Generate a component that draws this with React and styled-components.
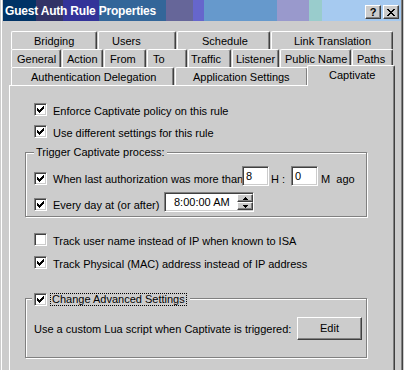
import React from 'react';
import styled, { createGlobalStyle } from 'styled-components';

const GlobalStyle = createGlobalStyle`
  html, body {
    margin: 0;
    padding: 0;
    background: #cccccc;
  }
  body {
    font-family: "Liberation Sans", Arial, sans-serif;
    font-size: 11px;
    color: #000;
  }
`;

const Window = styled.div`
  box-sizing: border-box;
  width: 404px;
  height: 370px;
  padding: 0 3px;
  background: #cccccc;
  overflow: hidden;
  box-shadow: inset 1px 0 0 #cccccc, inset 2px 0 0 #ffffff,
    inset -1px 0 0 #cccccc, inset -2px 0 0 #404040, inset -3px 0 0 #808080;
`;

const TitleBar = styled.div`
  display: flex;
  align-items: flex-start;
  justify-content: space-between;
  height: 21px;
  background: linear-gradient(
    to right,
    #003366 0 33px,
    #333366 33px 60px,
    #333399 60px 96px,
    #336699 96px 163px,
    #666699 163px 190px,
    #6666cc 190px 201px,
    #6699cc 201px 274px,
    #9999cc 274px 306px,
    #99cccc 306px 319px,
    #a6caf0 319px
  );
`;

const TitleText = styled.span`
  padding: 4px 0 0 2px;
  font-size: 12px;
  font-weight: bold;
  letter-spacing: -0.2px;
  line-height: 14px;
  color: #fff;
  white-space: nowrap;
`;

const CaptionButtons = styled.div`
  display: flex;
  gap: 2px;
  margin: 5px 2px 0 0;
`;

const CaptionButton = styled.div`
  box-sizing: border-box;
  width: 16px;
  height: 14px;
  display: flex;
  align-items: center;
  justify-content: center;
  background: #cccccc;
  border-top: 1px solid #fff;
  border-left: 1px solid #fff;
  border-right: 1px solid #404040;
  border-bottom: 1px solid #404040;
  box-shadow: inset -1px -1px 0 #808080;
  font-size: 11px;
  font-weight: bold;
  line-height: 11px;
`;

const Body = styled.div`
  padding: 10px 6px 0 6px;
`;

const TabStrip = styled.div`
  margin-left: 2px;
  width: 383px;
`;

const TabRow = styled.div`
  display: flex;
  align-items: flex-start;
  height: 18px;
`;

const Tab = styled.div`
  position: relative;
  z-index: ${p => (p.$active ? 2 : 'auto')};
  box-sizing: border-box;
  flex: none;
  width: ${p => (p.$active ? p.$w + 3 : p.$w - 1)}px;
  height: ${p => (p.$active ? 21 : 18)}px;
  margin: ${p => (p.$active ? '-2px 0 0 -2px' : '0 1px 0 0')};
  padding: 2px 0 0 ${p => p.$pad}px;
  background: #cccccc;
  border-top: 1px solid #fff;
  border-left: 1px solid #fff;
  border-right: 1px solid #404040;
  border-radius: 2px 2px 0 0;
  box-shadow: inset -1px 0 0 #808080;
  line-height: 14px;
  white-space: nowrap;
`;

const Panel = styled.div`
  box-sizing: border-box;
  height: 300px;
  display: flex;
  flex-direction: column;
  align-items: flex-start;
  padding-left: 15px;
  border-top: 1px solid #fff;
  border-left: 1px solid #fff;
  border-right: 1px solid #404040;
  box-shadow: inset -1px 0 0 #808080;
`;

const CheckRow = styled.div`
  display: flex;
  align-items: flex-start;
  gap: 6px;
  height: 13px;
  margin-top: ${p => p.$mt || 0}px;
  margin-left: 9px;
`;

const Label = styled.span`
  box-sizing: border-box;
  flex: none;
  width: ${p => (p.$w ? `${p.$w}px` : 'auto')};
  padding-top: ${p => (p.$pt === undefined ? 2 : p.$pt)}px;
  padding-left: ${p => p.$pl || 0}px;
  line-height: 13px;
  white-space: pre;
`;

const BoxFrame = styled.span`
  box-sizing: border-box;
  flex: none;
  display: flex;
  align-items: center;
  justify-content: center;
  width: 13px;
  height: 13px;
  margin-top: ${p => p.$mt || 0}px;
  background: #fff;
  border-top: 1px solid #808080;
  border-left: 1px solid #808080;
  border-right: 1px solid #fff;
  border-bottom: 1px solid #fff;
  box-shadow: inset 1px 1px 0 #404040, inset -1px -1px 0 #cccccc;
`;

const checkCols = [2, 3, 4, 3, 2, 1, 0];

const CheckBox = ({ checked, mt }) => (
  <BoxFrame $mt={mt}>
    {checked && (
      <svg width="7" height="7" viewBox="0 0 7 7" shapeRendering="crispEdges">
        {checkCols.map((y, x) => (
          <rect key={x} x={x} y={y} width="1" height="3" fill="#000" />
        ))}
      </svg>
    )}
  </BoxFrame>
);

const Group = styled.div`
  position: relative;
  box-sizing: border-box;
  width: 342px;
  height: ${p => p.$h}px;
  margin-top: ${p => p.$mt}px;
  padding: 0 4px 0 8px;
  border: 1px solid #808080;
  box-shadow: inset 1px 1px 0 #fff, 1px 1px 0 #fff;
`;

const Legend = styled.div`
  position: absolute;
  top: ${p => p.$top}px;
  left: ${p => p.$left}px;
  display: flex;
  align-items: flex-start;
  gap: 3px;
  padding: 0 ${p => p.$pr || 2}px 0 2px;
  background: #cccccc;
  line-height: 13px;
`;

const FocusLabel = styled.span`
  padding: 0 1px;
  border: 1px dotted #000;
  line-height: 11px;
  white-space: nowrap;
`;

const FieldRow = styled.div`
  display: flex;
  align-items: flex-start;
  margin-top: ${p => p.$mt}px;
`;

const TextBox = styled.div`
  box-sizing: border-box;
  flex: none;
  display: flex;
  align-items: center;
  width: ${p => p.$w}px;
  height: 20px;
  padding-left: ${p => p.$pad || 2}px;
  background: #fff;
  border-top: 1px solid #808080;
  border-left: 1px solid #808080;
  border-right: 1px solid #fff;
  border-bottom: 1px solid #fff;
  box-shadow: inset 1px 1px 0 #404040, inset -1px -1px 0 #cccccc;
  line-height: 13px;
  white-space: nowrap;
`;

const TimeText = styled.span`
  flex: 1;
`;

const Spinner = styled.div`
  display: flex;
  flex-direction: column;
`;

const SpinButton = styled.div`
  box-sizing: border-box;
  display: flex;
  align-items: center;
  justify-content: center;
  width: 16px;
  height: 8px;
  background: #cccccc;
  border-top: 1px solid #fff;
  border-left: 1px solid #fff;
  border-right: 1px solid #404040;
  border-bottom: 1px solid #404040;
  box-shadow: inset -1px -1px 0 #808080;
`;

const ButtonRow = styled.div`
  display: flex;
  align-items: center;
  justify-content: space-between;
  margin-top: ${p => p.$mt}px;
`;

const PushButton = styled.div`
  box-sizing: border-box;
  display: flex;
  align-items: center;
  justify-content: center;
  width: 65px;
  height: 23px;
  background: #cccccc;
  border-top: 1px solid #fff;
  border-left: 1px solid #fff;
  border-right: 1px solid #404040;
  border-bottom: 1px solid #404040;
  box-shadow: inset -1px -1px 0 #808080;
  line-height: 13px;
`;

const tabRows = [
  [
    ['Bridging', 87, 22],
    ['Users', 79, 13],
    ['Schedule', 94, 24],
    ['Link Translation', 123, 22],
  ],
  [
    ['General', 51, 5],
    ['Action', 42, 4],
    ['From', 43, 5],
    ['To', 41, 5],
    ['Traffic', 44, 2],
    ['Listener', 48, 3],
    ['Public Name', 72, 4],
    ['Paths', 42, 4],
  ],
  [
    ['Authentication Delegation', 164, 19],
    ['Application Settings', 134, 17],
    ['Captivate', 85, 20, true],
  ],
];

const Arrow = ({ up }) => (
  <svg width="5" height="3" viewBox="0 0 5 3" shapeRendering="crispEdges">
    <path d={up ? 'M2 0h1v1h1v1h1v1H0V2h1V1h1z' : 'M0 0h5v1H4v1H3v1H2V2H1V1H0z'} fill="#000" />
  </svg>
);

export default function App() {
  return (
    <>
      <GlobalStyle />
      <Window>
        <TitleBar>
          <TitleText>Guest Auth Rule Properties</TitleText>
          <CaptionButtons>
            <CaptionButton>?</CaptionButton>
            <CaptionButton>
              <svg width="8" height="7" viewBox="0 0 8 7" shapeRendering="crispEdges">
                <path
                  d="M0 0h2v1h1v1h2V1h1V0h2v1H7v1H6v1H5v1h1v1h1v1h1v1H6V6H5V5H3v1H2v1H0V6h1V5h1V4h1V3H2V2H1V1H0z"
                  fill="#000"
                />
              </svg>
            </CaptionButton>
          </CaptionButtons>
        </TitleBar>

        <Body>
          <TabStrip>
            {tabRows.map((row, i) => (
              <TabRow key={i}>
                {row.map(([name, w, pad, active]) => (
                  <Tab key={name} $w={w} $pad={active ? pad + 1 : pad} $active={active}>
                    {name}
                  </Tab>
                ))}
              </TabRow>
            ))}
          </TabStrip>

          <Panel>
            <CheckRow $mt={17}>
              <CheckBox checked />
              <Label>Enforce Captivate policy on this rule</Label>
            </CheckRow>
            <CheckRow $mt={9}>
              <CheckBox checked />
              <Label>Use different settings for this rule</Label>
            </CheckRow>

            <Group $mt={14} $h={65}>
              <Legend $top={-7} $left={8}>
                Trigger Captivate process:
              </Legend>
              <FieldRow $mt={13}>
                <CheckBox checked mt={6} />
                <Label $w={195} $pl={6} $pt={7}>
                  When last authorization was more than
                </Label>
                <TextBox $w={27} $pad={3}>8</TextBox>
                <Label $w={22} $pl={2} $pt={7}>H :</Label>
                <TextBox $w={27} $pad={3}>0</TextBox>
                <Label $pl={3} $pt={7}>M  ago</Label>
              </FieldRow>
              <FieldRow $mt={6}>
                <CheckBox checked mt={6} />
                <Label $w={117} $pl={6} $pt={7}>
                  Every day at (or after)
                </Label>
                <TextBox $w={90} $pad={9}>
                  <TimeText>8:00:00 AM</TimeText>
                  <Spinner>
                    <SpinButton>
                      <Arrow up />
                    </SpinButton>
                    <SpinButton>
                      <Arrow />
                    </SpinButton>
                  </Spinner>
                </TextBox>
              </FieldRow>
            </Group>

            <CheckRow $mt={16}>
              <CheckBox />
              <Label>Track user name instead of IP when known to ISA</Label>
            </CheckRow>
            <CheckRow $mt={10}>
              <CheckBox checked />
              <Label>Track Physical (MAC) address instead of IP address</Label>
            </CheckRow>

            <Group $mt={29} $h={60}>
              <Legend $top={-6} $left={6} $pr={3}>
                <CheckBox checked />
                <FocusLabel>Change Advanced Settings</FocusLabel>
              </Legend>
              <ButtonRow $mt={18}>
                <Label>Use a custom Lua script when Captivate is triggered:</Label>
                <PushButton>Edit</PushButton>
              </ButtonRow>
            </Group>
          </Panel>
        </Body>
      </Window>
    </>
  );
}
